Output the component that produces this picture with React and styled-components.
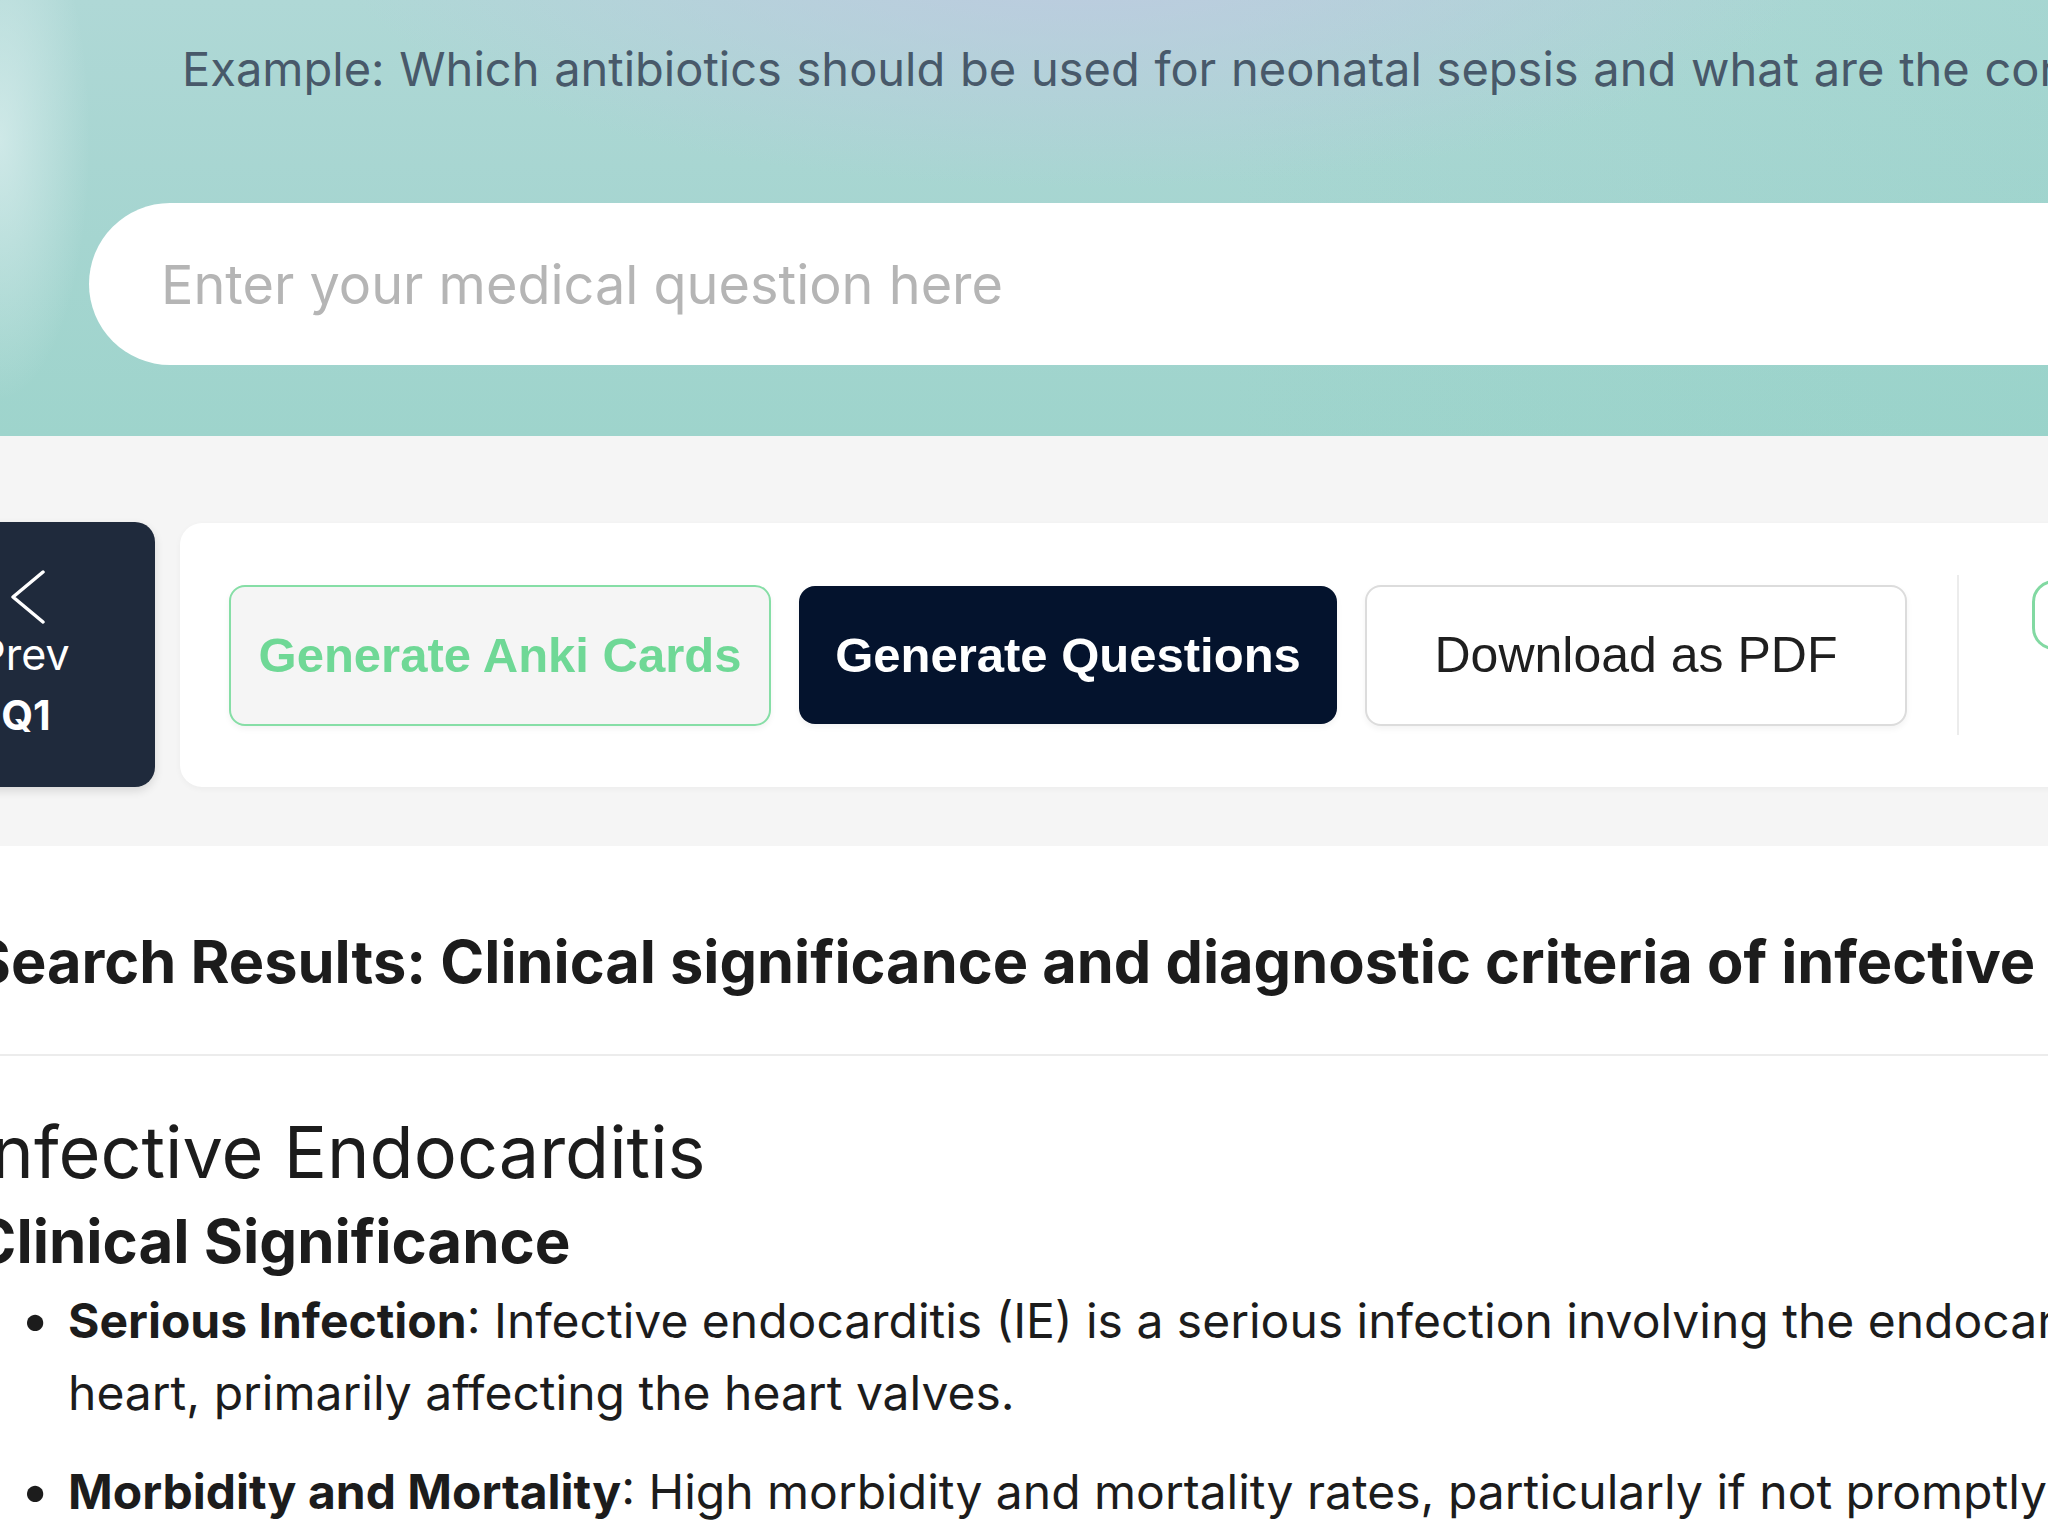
import React from 'react';
import styled, { createGlobalStyle, css } from 'styled-components';

const GlobalStyle = createGlobalStyle`
  html, body {
    margin: 0;
    padding: 0;
    background: #ffffff;
    overflow-x: hidden;
  }
  body {
    font-family: Inter, "Noto Sans", "Liberation Sans", sans-serif;
    color: #1c1c1c;
  }
  * { box-sizing: border-box; }
`;

const Page = styled.div`
  width: 2048px;
  overflow: hidden;
`;

const Hero = styled.header`
  height: 436px;
  padding: 42px 0 0 0;
  background:
    radial-gradient(ellipse 90px 260px at 0px 140px, rgba(222, 240, 240, 0.7), rgba(222, 240, 240, 0) 100%),
    radial-gradient(ellipse 1000px 330px at 1080px -60px, rgba(192, 200, 226, 0.9), rgba(192, 200, 226, 0) 75%),
    linear-gradient(90deg, rgba(255,255,255,0) 60%, rgba(140, 208, 196, 0.25) 100%),
    linear-gradient(180deg, #afd8d6 0%, #a5d5d0 55%, #9ed4cc 100%);
  display: flex;
  flex-direction: column;
`;

const ExampleText = styled.p`
  margin: 0 0 0 182px;
  font-size: 47px;
  word-spacing: 1.5px;
  line-height: 54px;
  color: #48596a;
  white-space: nowrap;
`;

const SearchPill = styled.div`
  margin: 107px 0 0 89px;
  width: 2200px;
  height: 162px;
  background: #ffffff;
  border-radius: 81px;
  display: flex;
  align-items: center;
  padding-left: 70px;
`;

const SearchInput = styled.input`
  border: none;
  outline: none;
  background: transparent;
  width: 100%;
  font-family: Inter, "Noto Sans", sans-serif;
  font-size: 54px;
  color: #333;
  &::placeholder {
    color: #b5b5b5;
  }
`;

const ToolbarSection = styled.section`
  background: #f5f5f5;
  height: 410px;
  padding-top: 86px;
  display: flex;
  align-items: flex-start;
  gap: 25px;
`;

const PrevButton = styled.button`
  margin-left: -107px;
  width: 262px;
  height: 265px;
  flex-shrink: 0;
  border: none;
  border-radius: 20px;
  background: #1f2a3c;
  color: #ffffff;
  box-shadow: 0 4px 10px rgba(0, 0, 0, 0.12);
  display: flex;
  flex-direction: column;
  align-items: center;
  justify-content: center;
  font-family: Inter, "Noto Sans", sans-serif;
  padding: 0;
`;

const ChevronBox = styled.span`
  display: flex;
  margin-left: 8px;
`;

const PrevLabel = styled.span`
  margin-top: 6px;
  font-size: 43px;
  line-height: 48px;
`;

const QLabel = styled.span`
  margin-top: 13px;
  font-size: 41px;
  line-height: 48px;
  font-weight: 700;
  margin-left: 4px;
`;

const ActionCard = styled.div`
  flex-shrink: 0;
  width: 2100px;
  height: 264px;
  margin-top: 1px;
  background: #ffffff;
  border-radius: 22px;
  box-shadow: 0 2px 6px rgba(0, 0, 0, 0.04);
  padding: 0 0 0 49px;
  display: flex;
  align-items: center;
  gap: 28px;
`;

const variants = {
  green: css`
    width: 542px;
    height: 141px;
    background: #f5f5f5;
    border: 2px solid #86dea6;
    color: #6fd896;
    font-weight: 700;
    font-size: 49px;
  `,
  dark: css`
    width: 538px;
    height: 138px;
    background: #04132d;
    border: none;
    color: #ffffff;
    font-weight: 700;
    font-size: 49px;
  `,
  plain: css`
    width: 542px;
    height: 141px;
    background: #ffffff;
    border: 2px solid #dcdcdc;
    color: #1f1f1f;
    font-weight: 400;
    font-size: 50px;
  `,
};

const ActionButton = styled.button`
  flex-shrink: 0;
  border-radius: 16px;
  font-family: "Liberation Sans", Arial, sans-serif;
  box-shadow: 0 3px 6px rgba(0, 0, 0, 0.05);
  ${({ $variant }) => variants[$variant]}
`;

const Divider = styled.div`
  flex-shrink: 0;
  width: 2px;
  height: 160px;
  margin-left: 22px;
  background: #ececec;
`;

const NextGroup = styled.div`
  flex-shrink: 0;
  height: 160px;
  margin-left: 45px;
  display: flex;
  flex-direction: column;
`;

const NextPill = styled.div`
  margin-top: 5px;
  width: 160px;
  height: 70px;
  border: 3px solid #82d9a2;
  border-radius: 22px;
  background: #ffffff;
`;

const Results = styled.main`
  margin-left: -28px;
  width: 2440px;
`;

const ResultsHeader = styled.div`
  padding: 75px 0 52px 0;
  border-bottom: 2px solid #ececec;
`;

const ResultsTitle = styled.h2`
  margin: 0;
  font-size: 59.5px;
  line-height: 81px;
  font-weight: 700;
  color: #1c1c1c;
  white-space: nowrap;
`;

const Article = styled.article`
  padding-top: 54px;
  color: #1c1c1c;
`;

const DocTitle = styled.h1`
  margin: 0;
  font-size: 72px;
  line-height: 84px;
  font-weight: 400;
`;

const SectionTitle = styled.h2`
  margin: 8px 0 0 0;
  font-size: 60px;
  line-height: 78px;
  font-weight: 700;
`;

const BulletList = styled.ul`
  margin: 4px 0 0 0;
  padding-left: 96px;
  list-style: none;
`;

const Bullet = styled.li`
  font-size: 48px;
  line-height: 72px;
  margin-bottom: 26px;
  &::before {
    content: "•";
    display: inline-block;
    width: 38px;
    margin-left: -52px;
    margin-right: 14px;
    text-align: center;
    font-size: 52px;
  }
  strong {
    font-weight: 700;
  }
`;

const ChevronLeft = () => (
  <svg width="36" height="54" viewBox="0 0 36 54" fill="none">
    <polyline
      points="33,2 3,27 33,52"
      stroke="#ffffff"
      strokeWidth="3.5"
      strokeLinecap="round"
      strokeLinejoin="round"
    />
  </svg>
);

export default function App() {
  return (
    <Page>
      <GlobalStyle />
      <Hero>
        <ExampleText>
          Example: Which antibiotics should be used for neonatal sepsis and what are the correct doses?
        </ExampleText>
        <SearchPill>
          <SearchInput placeholder="Enter your medical question here" />
        </SearchPill>
      </Hero>

      <ToolbarSection>
        <PrevButton>
          <ChevronBox>
            <ChevronLeft />
          </ChevronBox>
          <PrevLabel>Prev</PrevLabel>
          <QLabel>Q1</QLabel>
        </PrevButton>
        <ActionCard>
          <ActionButton $variant="green">Generate Anki Cards</ActionButton>
          <ActionButton $variant="dark">Generate Questions</ActionButton>
          <ActionButton $variant="plain">Download as PDF</ActionButton>
          <Divider />
          <NextGroup>
            <NextPill />
          </NextGroup>
        </ActionCard>
      </ToolbarSection>

      <Results>
        <ResultsHeader>
          <ResultsTitle>
            Search Results: Clinical significance and diagnostic criteria of infective endocarditis
          </ResultsTitle>
        </ResultsHeader>
        <Article>
          <DocTitle>Infective Endocarditis</DocTitle>
          <SectionTitle>Clinical Significance</SectionTitle>
          <BulletList>
            <Bullet>
              <strong>Serious Infection</strong>: Infective endocarditis (IE) is a serious infection
              involving the endocardium of the heart, primarily affecting the heart valves.
            </Bullet>
            <Bullet>
              <strong>Morbidity and Mortality</strong>: High morbidity and mortality rates, particularly
              if not promptly diagnosed and treated.
            </Bullet>
          </BulletList>
        </Article>
      </Results>
    </Page>
  );
}
